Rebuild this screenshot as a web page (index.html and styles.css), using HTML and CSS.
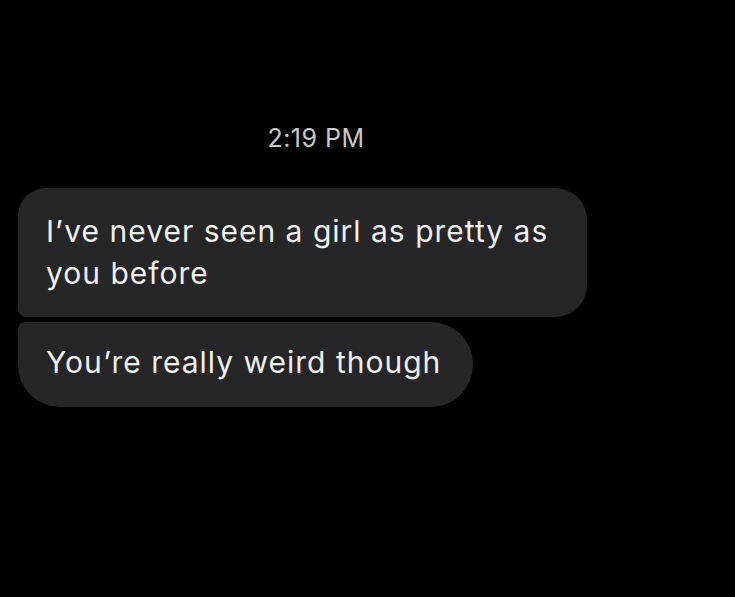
FILE: index.html
```html
<!DOCTYPE html>
<html lang="en">
<head>
<meta charset="utf-8">
<title>Messages</title>
<link rel="stylesheet" href="styles.css">
</head>
<body>
<main class="chat">
  <div class="timestamp">2:19 PM</div>
  <div class="thread">
    <div class="bubble bubble-first">I’ve never seen a girl as pretty as you before</div>
    <div class="bubble bubble-last">You’re really weird though</div>
  </div>
</main>
</body>
</html>
```
FILE: styles.css
```css
html, body {
  margin: 0;
  padding: 0;
  background: #000;
  height: 100%;
}
.chat {
  padding: 123px 18px 0 18px;
  font-family: Inter, "Liberation Sans", sans-serif;
}
.timestamp {
  width: 596px;
  text-align: center;
  color: #c9c9c9;
  font-size: 25px;
  letter-spacing: 0.5px;
  line-height: 30px;
  margin-bottom: 35px;
}
.thread {
  display: flex;
  flex-direction: column;
  align-items: flex-start;
  gap: 5px;
}
.bubble {
  background: #262628;
  color: #f0f0f0;
  font-size: 30px;
  letter-spacing: 1px;
  line-height: 42px;
  padding: 22px 28px 23px 28px;
  box-sizing: border-box;
}
.bubble-first {
  width: 569px;
  padding-right: 20px;
  border-radius: 28px 32px 32px 8px;
}
.bubble-last {
  padding-top: 19px;
  padding-bottom: 24px;
  padding-right: 32px;
  border-radius: 8px 42px 42px 42px;
}
```
